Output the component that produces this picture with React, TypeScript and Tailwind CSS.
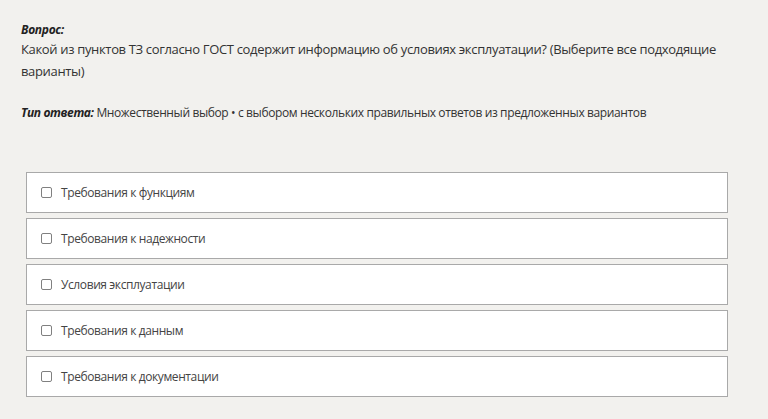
import React from "react";

const options = [
  "Требования к функциям",
  "Требования к надежности",
  "Условия эксплуатации",
  "Требования к данным",
  "Требования к документации",
];

export default function App() {
  return (
    <div
      className="min-h-[419px] w-full bg-[#f2f1ee] text-[#333] pl-[21px] pr-[21px] pt-[22px]"
      style={{ fontFamily: '"Open Sans", "Noto Sans", sans-serif' }}
    >
      <div className="text-[12px] font-bold italic leading-[16px] tracking-[-0.3px] text-[#222]">Вопрос:</div>
      <div className="text-[13px] leading-[22px] tracking-[-0.34px] text-[#333]">
        Какой из пунктов ТЗ согласно ГОСТ содержит информацию об условиях эксплуатации? (Выберите все подходящие варианты)
      </div>
      <div className="mt-[22px] text-[12px] leading-[18px] tracking-[-0.38px] text-[#333]">
        <span className="font-bold italic text-[#222]">Тип ответа:</span> Множественный выбор • с выбором нескольких правильных ответов из предложенных вариантов
      </div>
      <div className="mt-[50px] ml-[5px] w-[702px] flex flex-col gap-[5px]">
        {options.map((o) => (
          <label
            key={o}
            className="flex h-[41px] items-center border border-[#a9a9a9] bg-white pl-[14px] text-[12px] tracking-[-0.4px] text-[#444]"
          >
            <span className="mr-[9px] h-[11px] w-[11px] rounded-[2px] border border-[#808080] bg-white" />
            {o}
          </label>
        ))}
      </div>
    </div>
  );
}
